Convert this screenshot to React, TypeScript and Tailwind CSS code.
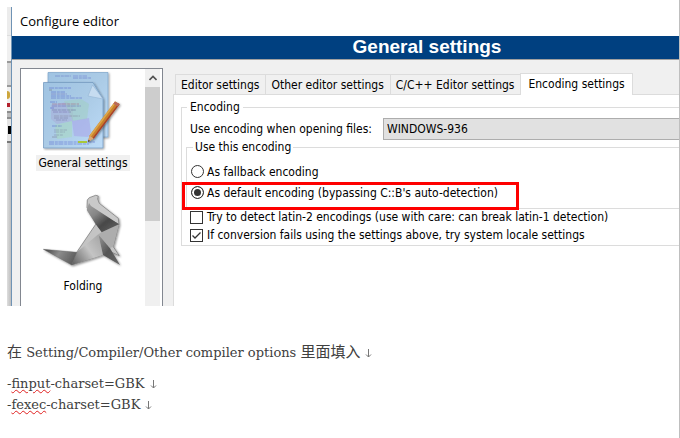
import { useState } from "react";

const tabs = ["Editor settings", "Other editor settings", "C/C++ Editor settings", "Encoding settings"];

// y, x, width, colour of the code lines on the sheets
const codeLines: [number, number, number, string][] = [
    [5, 12, 16, "#5560b8"], [5, 30, 14, "#5b63c9"], [7, 30, 18, "#4d55c0"],
    [17, 6, 22, "#3c49c4"], [19, 6, 3, "#555"], [21, 8, 14, "#3c49c4"], [23, 8, 16, "#5a4fb0"],
    [25, 8, 20, "#3c49c4"], [27, 8, 31, "#4450c0"], [31, 7, 7, "#3c49c4"], [33, 9, 27, "#a04a6a"],
    [35, 9, 29, "#5a50a8"], [37, 7, 4, "#3c49c4"], [39, 9, 24, "#5a5a8a"], [41, 10, 18, "#6a5aa0"],
    [45, 11, 26, "#7a7a90"], [47, 11, 14, "#6a6a90"], [49, 13, 11, "#7070a0"], [55, 9, 10, "#3c49c4"],
    [59, 11, 13, "#77809a"], [61, 11, 11, "#77809a"], [64, 11, 9, "#77809a"], [66, 9, 6, "#667"],
    [71, 6, 46, "#3a48c8"], [73, 6, 40, "#3a48c8"],
];

const EditorIcon = () => (
    <svg viewBox="0 0 80 80" className="w-20 h-20" aria-hidden="true">
        <defs>
            <linearGradient id="sheet" x1="0" y1="0" x2="1" y2="1">
                <stop offset="0" stopColor="#9fc3e2" />
                <stop offset="0.5" stopColor="#abcbe6" />
                <stop offset="1" stopColor="#bddcf8" />
            </linearGradient>
            <filter id="soft" x="-20%" y="-20%" width="140%" height="140%">
                <feDropShadow dx="1" dy="1" stdDeviation="1" floodColor="#000" floodOpacity="0.4" />
            </filter>
        </defs>
        <path d="M5 1.500H65V66H5Z" fill="url(#sheet)" stroke="#7ba3c8" strokeWidth="0.700" filter="url(#soft)" />
        <path d="M0.500 11.500H50L60 28V77H0.500Z" fill="url(#sheet)" stroke="#7097bd" strokeWidth="0.700" filter="url(#soft)" />
        <path d="M8 34L24 31L30 36V50L14 53L8 48Z" fill="#a99fd0" opacity="0.350" />
        <path d="M21 30L38 28L46 33L44 48L30 50Z" fill="#9fd0c0" opacity="0.500" />
        <path d="M12 54L29 50V66L14 68Z" fill="#a8d8c0" opacity="0.550" />
        <path d="M29 50L46 47L48 61L45 66L31 65Z" fill="#a9a6ea" opacity="0.600" />
        <path d="M49.500 14L45 25L60 28Z" fill="#c6dcf0" stroke="#8fb0d0" strokeWidth="0.500" />
        {codeLines.map(([y, x, w, color], i) => (
            <path key={i} d={`M${x} ${y}h${w}`} stroke={color} strokeWidth="0.900" strokeDasharray="5 0.800 3 0.600" opacity="0.480" />
        ))}
        <path d="M35 71h9" stroke="#a9c83a" strokeWidth="2" />
        <g filter="url(#soft)">
            <path d="M45 71L46.500 64.500L72 30.500L76.500 33L50.500 67.500Z" fill="#c87f2a" />
            <path d="M46.500 64.500L72 30.500L73.500 31.300L48 65.500Z" fill="#dca648" />
            <path d="M49.500 67L75.500 32.500L76.700 33.200L50.800 67.700Z" fill="#a8402a" />
            <path d="M72 30.500L76.500 33L74.800 35.400L70.400 32.700Z" fill="#b9695a" />
            <path d="M45 71L46.500 64.500L50.500 67.500Z" fill="#d9a878" />
            <path d="M45 71L45.500 68.800L47 69.900Z" fill="#333" />
        </g>
    </svg>
);

const FoldingIcon = () => (
    <svg viewBox="0 0 80 80" className="w-20 h-20" aria-hidden="true">
        <defs>
            <linearGradient id="head" x1="0" y1="0" x2="0.9" y2="1">
                <stop offset="0.100" stopColor="#9a9a9a" />
                <stop offset="0.350" stopColor="#858585" />
                <stop offset="0.650" stopColor="#484848" />
                <stop offset="1" stopColor="#606060" />
            </linearGradient>
            <linearGradient id="tail" x1="0" y1="0" x2="1" y2="0.300">
                <stop offset="0" stopColor="#3c3c3c" />
                <stop offset="0.500" stopColor="#8c8c8c" />
                <stop offset="1" stopColor="#606060" />
            </linearGradient>
            <linearGradient id="belly" x1="0" y1="1" x2="1" y2="0.300">
                <stop offset="0" stopColor="#5c5c5c" />
                <stop offset="0.600" stopColor="#c4c4c4" />
                <stop offset="1" stopColor="#aaa" />
            </linearGradient>
            <linearGradient id="arm" x1="0" y1="0" x2="1" y2="1">
                <stop offset="0" stopColor="#999" />
                <stop offset="0.500" stopColor="#555" />
                <stop offset="1" stopColor="#666" />
            </linearGradient>
            <filter id="fold-shadow" x="-20%" y="-20%" width="140%" height="140%">
                <feDropShadow dx="1" dy="1" stdDeviation="1.200" floodColor="#000" floodOpacity="0.450" />
            </filter>
        </defs>
        <g filter="url(#fold-shadow)" strokeLinejoin="round">
            <path d="M52.700 30.300L33.700 58.300L28.700 71L59.700 61L68 58L76.300 61.700L70.300 52.700L76 30Z" fill="#c4c4c4" stroke="#777" strokeWidth="0.700" />
            <path d="M58.700 38.300L76 30L70 53L67 54L55.300 40.300Z" fill="#adadad" />
            <path d="M33.700 58.300L55.300 40.300L60 61L28.700 71Z" fill="url(#belly)" />
            <path d="M0.300 55.300L33.700 58.300L28.700 71Z" fill="url(#tail)" stroke="#666" strokeWidth="0.400" />
            <path d="M55.300 40.300L67 54.300L77 71L60 61Z" fill="url(#arm)" />
            <path d="M44.300 6L46.300 3.700L52.700 1.300L55.300 2L54.700 5L56.300 9.300L75.300 24.300L76 30.300L44 14Z" fill="#c9c9c9" stroke="#777" strokeWidth="0.700" />
            <path d="M46 9L43.700 16L52.700 30.300L58.700 38.300L76 30.300L48 12Z" fill="url(#head)" />
        </g>
    </svg>
);

const ReturnMark = () => (
    <svg viewBox="0 0 7 9" className="inline-block w-[7px] h-[9px] ml-[5px]" fill="none" stroke="#777" aria-hidden="true">
        <path d="M3.500 0V8M1 5.500L3.500 8L6 5.500" />
    </svg>
);

// the slice of the main window that shows behind the dialog
const BackWindow = () => (
    <div className="w-1 shrink-0 flex flex-col bg-[#d4d4d4] overflow-hidden">
        <div className="h-7 bg-[#ececec]"></div>
        <div className="h-[26px] border-t border-[#ddd] bg-[#f0f0f0]"></div>
        <div className="h-[26px] border-y-2 border-[#999] bg-[#d6d6d6]"></div>
        <div className="h-6 bg-[#efefef] pt-1">
            <div className="h-2 w-[3px] rounded-r bg-[#cda63c]"></div>
            <div className="mt-1 h-1 w-[3px] bg-[#b3202c]"></div>
        </div>
        <div className="h-2 border-y-2 border-[#8c8c8c] bg-[#bbb]"></div>
        <div className="h-6 border-b-2 border-[#777] bg-[#e4e4e4] pt-[7px] pl-px">
            <div className="h-2 w-[3px] bg-black"></div>
        </div>
        <div className="grow bg-gradient-to-r from-[#dedede] to-[#bdbdbd]"></div>
    </div>
);

const App = () => {
    const [tab, setTab] = useState(tabs[3]);
    const [mode, setMode] = useState("default");
    const [latin, setLatin] = useState(false);
    const [locale, setLocale] = useState(true);

    const radio = "appearance-none size-[13px] shrink-0 rounded-full border border-[#333] bg-white checked:bg-[#333] checked:shadow-[inset_0_0_0_2px_#fff]";
    const checkbox = "appearance-none size-[13px] border border-[#333] bg-white block";
    const misspelt = "underline decoration-wavy decoration-1 decoration-[#e02020] underline-offset-1";

    return <div className="min-h-screen bg-white border-r border-[#bfbfbf] pt-[7px] pl-[7px]">
        <div className="flex text-[12px] leading-[14px] text-black font-['DejaVu_Sans_Condensed','DejaVu_Sans',sans-serif]">
            <BackWindow />
            <div className="grow min-w-0 flex flex-col border-l border-[#6f93b5] bg-[#f0f0f0]">
                <div className="h-[29px] bg-white pl-2 pb-[2px] flex items-center text-[13px] font-['Open_Sans','Noto_Sans',sans-serif]">Configure editor</div>
                <h1 className="h-6 pl-[163px] bg-[#004080] border-b border-[#a0a0a0] text-white text-center text-[19px] leading-[22px] font-bold font-['Liberation_Sans',sans-serif]">General settings</h1>

                <div className="flex pt-2 pl-2 gap-[10px]">
                    <div className="w-[143px] shrink-0 flex border border-b-0 border-[#828790] bg-white pr-[2px]">
                        <ul className="grow pt-[2px] flex flex-col gap-[23px]">
                            <li className="flex flex-col items-center gap-1">
                                <EditorIcon />
                                <button className="h-4 px-[2px] bg-[#f0f0f0] whitespace-nowrap">General settings</button>
                            </li>
                            <li className="flex flex-col items-center gap-1">
                                <FoldingIcon />
                                <button className="h-4 px-[2px] whitespace-nowrap">Folding</button>
                            </li>
                        </ul>
                        <div className="w-[15px] bg-[#f0f0f0]">
                            <button aria-label="Scroll up" className="h-[18px] w-full flex items-center justify-center">
                                <svg viewBox="0 0 8 6" className="w-2 h-[6px]" fill="none" stroke="#505050" strokeWidth="1.600"><path d="M0.500 5L4 1.500L7.500 5" /></svg>
                            </button>
                            <div className="h-[134px] bg-[#cdcdcd]"></div>
                        </div>
                    </div>

                    <div className="grow min-w-0 flex flex-col pt-[5px]">
                        <div role="tablist" className="flex items-end pl-[2px] h-[21px]">
                            {tabs.map((name) => (
                                <button
                                    key={name}
                                    role="tab"
                                    aria-selected={tab === name}
                                    onClick={() => setTab(name)}
                                    className={tab === name
                                        ? "relative h-[22px] -mb-px px-[7px] pb-[2px] whitespace-nowrap bg-white border border-b-0 border-[#dcdcdc]"
                                        : "h-5 pl-[5px] pr-[6px] whitespace-nowrap bg-[#f0f0f0] border border-r-0 border-b-0 border-[#dcdcdc]"}
                                >
                                    {name}
                                </button>
                            ))}
                        </div>
                        <div className="h-[212px] bg-white border-t border-l border-[#dcdcdc] pl-[7px] pt-[5px]">
                            <fieldset className="min-w-0 border border-r-0 border-[#dcdcdc] pl-1 pb-[2px]">
                                <legend className="ml-px px-[3px]">Encoding</legend>
                                <div className="flex items-center pt-1 pl-1">
                                    <label htmlFor="encoding" className="w-[193px] shrink-0 whitespace-nowrap">Use encoding when opening files:</label>
                                    <select id="encoding" className="appearance-none grow min-w-0 h-[22px] pl-[3px] bg-[#e1e1e1] border border-r-0 border-[#adadad]">
                                        <option>WINDOWS-936</option>
                                    </select>
                                </div>
                                <fieldset className="min-w-0 border border-r-0 border-[#dcdcdc] pl-1 pt-[7px] pb-[5px]">
                                    <legend className="ml-[2px] px-[2px]">Use this encoding</legend>
                                    <label className="h-[21px] flex items-center gap-[3px] whitespace-nowrap">
                                        <input type="radio" name="mode" className={radio} checked={mode === "fallback"} onChange={() => setMode("fallback")} />
                                        As fallback encoding
                                    </label>
                                    <label className="relative h-[21px] flex items-center gap-[3px] whitespace-nowrap">
                                        <input type="radio" name="mode" className={radio} checked={mode === "default"} onChange={() => setMode("default")} />
                                        As default encoding (bypassing C::B's auto-detection)
                                        <span className="absolute top-0 -left-[9px] w-[337px] h-7 border-[3px] border-[#fe0000] pointer-events-none"></span>
                                    </label>
                                </fieldset>
                                <div className="flex flex-col gap-[2px] pl-1">
                                    {[
                                        { text: "Try to detect latin-2 encodings (use with care: can break latin-1 detection)", on: latin, set: setLatin },
                                        { text: "If conversion fails using the settings above, try system locale settings", on: locale, set: setLocale },
                                    ].map((item) => (
                                        <label key={item.text} className="h-4 flex items-center gap-1 whitespace-nowrap">
                                            <span className="relative shrink-0">
                                                <input type="checkbox" className={checkbox} checked={item.on} onChange={(e) => item.set(e.target.checked)} />
                                                {item.on && <svg viewBox="0 0 13 13" className="absolute inset-0 pointer-events-none" fill="none" stroke="#333" strokeWidth="1.300"><path d="M2.500 6.500L5 9L10.500 3.500" /></svg>}
                                            </span>
                                            {item.text}
                                        </label>
                                    ))}
                                </div>
                            </fieldset>
                        </div>
                    </div>
                </div>
            </div>
        </div>

        <div className="pt-9 text-[#404040] text-[13px] leading-[21px] font-['DejaVu_Serif','Noto_Sans_CJK_SC',serif]">
            <p className="mb-[10px]">
                <span className="text-[15px]">在</span> Setting/Compiler/Other compiler options <span className="text-[15px]">里面填入</span><ReturnMark />
            </p>
            <p>-<span className={misspelt}>finput</span>-charset=GBK<ReturnMark /></p>
            <p>-<span className={misspelt}>fexec</span>-charset=GBK<ReturnMark /></p>
        </div>
    </div>
}

export default App;
